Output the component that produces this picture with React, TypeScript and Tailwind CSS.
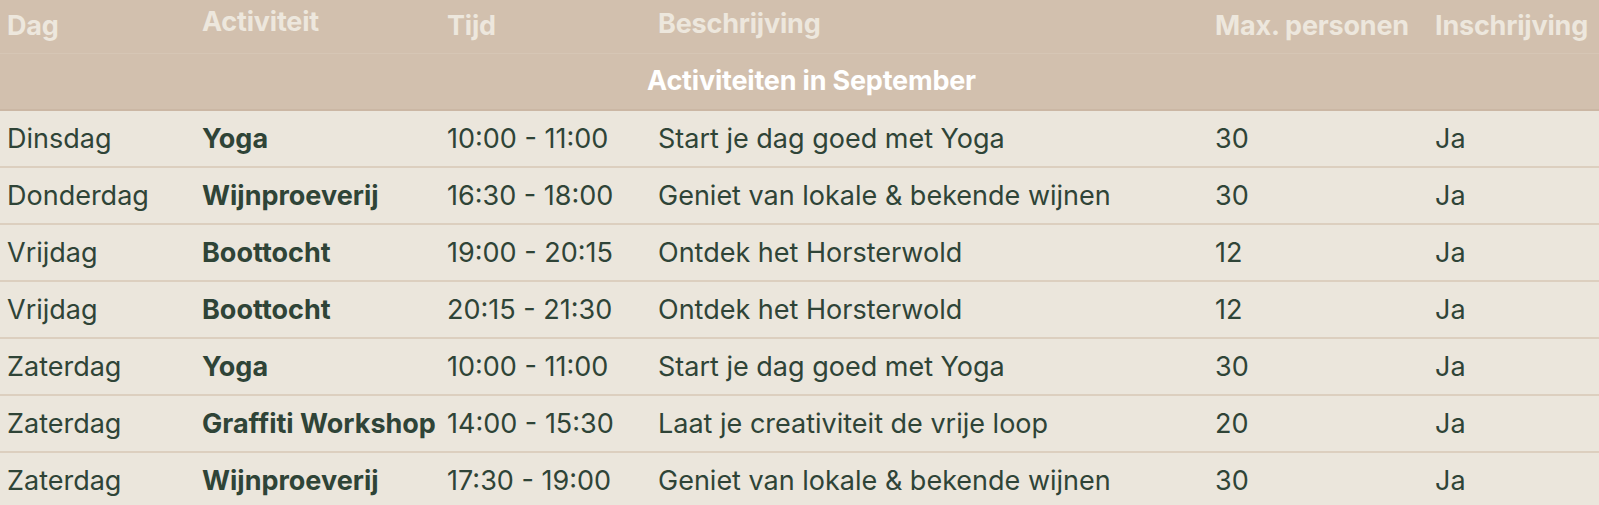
import React from "react";

const rows = [
  ["Dinsdag", "Yoga", "10:00 - 11:00", "Start je dag goed met Yoga", "30", "Ja"],
  ["Donderdag", "Wijnproeverij", "16:30 - 18:00", "Geniet van lokale & bekende wijnen", "30", "Ja"],
  ["Vrijdag", "Boottocht", "19:00 - 20:15", "Ontdek het Horsterwold", "12", "Ja"],
  ["Vrijdag", "Boottocht", "20:15 - 21:30", "Ontdek het Horsterwold", "12", "Ja"],
  ["Zaterdag", "Yoga", "10:00 - 11:00", "Start je dag goed met Yoga", "30", "Ja"],
  ["Zaterdag", "Graffiti Workshop", "14:00 - 15:30", "Laat je creativiteit de vrije loop", "20", "Ja"],
  ["Zaterdag", "Wijnproeverij", "17:30 - 19:00", "Geniet van lokale & bekende wijnen", "30", "Ja"],
];

const heads = ["Dag", "Activiteit", "Tijd", "Beschrijving", "Max. personen", "Inschrijving"];

export default function App() {
  return (
    <div
      className="w-[1599px] min-h-[505px] bg-[#ebe6dc]"
      style={{ fontFamily: "Inter, 'Noto Sans', sans-serif" }}
    >
      <table className="w-[1599px] table-fixed border-collapse text-[27px] leading-[36px]">
        <colgroup>
          <col className="w-[195px]" />
          <col className="w-[245px]" />
          <col className="w-[211px]" />
          <col className="w-[557px]" />
          <col className="w-[220px]" />
          <col className="w-[171px]" />
        </colgroup>
        <thead className="bg-[#d2c0ae]">
          <tr className="h-[53px] border-b border-[#d6c6b5]">
            {heads.map((h, i) => (
              <th
                key={h}
                className={
                  "pl-[7px] pr-0 text-left align-middle font-bold text-[#ede7dd] whitespace-nowrap tracking-[-0.2px] " +
                  (i === 1 ? "pb-[8px]" : i === 3 ? "pb-[4px]" : "")
                }
              >
                {h}
              </th>
            ))}
          </tr>
          <tr className="h-[57px] border-b-2 border-[#cbb7a4]">
            <th
              colSpan={6}
              className="text-center font-bold text-white pl-[24px] tracking-[-0.2px]"
            >
              Activiteiten in September
            </th>
          </tr>
        </thead>
        <tbody className="text-[#2f4437]">
          {rows.map((r, i) => (
            <tr key={i} className="h-[57px] border-b-2 border-[#dccfbf]">
              {r.map((c, j) => (
                <td
                  key={j}
                  className={
                    "pl-[7px] pr-0 align-middle whitespace-nowrap " +
                    (j === 1 ? "font-bold" : "font-normal")
                  }
                >
                  {c}
                </td>
              ))}
            </tr>
          ))}
        </tbody>
      </table>
    </div>
  );
}
